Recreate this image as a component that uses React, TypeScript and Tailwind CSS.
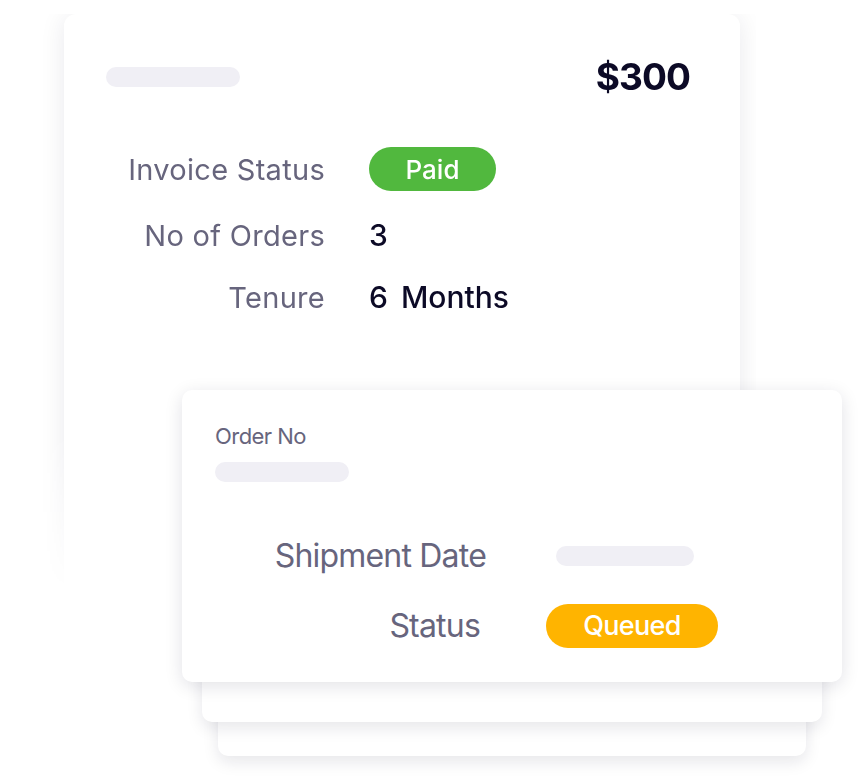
const font = "font-['Inter','Noto_Sans',sans-serif]";

function Bar({ className = "" }: { className?: string }) {
  return <div className={`h-5 rounded-full bg-[#f0eff5] ${className}`} />;
}

function Row({ label, children, className = "" }: { label: string; children: React.ReactNode; className?: string }) {
  return (
    <div className={`flex items-center h-[44px] ${className}`}>
      <span className="w-[261px] text-right text-[29px] leading-none tracking-[0.01em] text-[#67657d]">{label}</span>
      <div className="ml-[44px] flex items-center">{children}</div>
    </div>
  );
}

export default function App() {
  return (
    <div className={`w-[860px] h-[778px] bg-white overflow-hidden ${font}`}>
      {/* invoice card, fading out at the bottom */}
      <div className="pl-[24px] w-[756px] [mask-image:linear-gradient(to_bottom,black_70%,transparent_96%)]">
        <div className="ml-[40px] mt-[14px] w-[676px] h-[600px] bg-white rounded-[12px] shadow-[0_2px_26px_rgba(20,20,50,0.09)]">
          <div className="flex items-center justify-between pl-[42px] pr-[50px] pt-[44px]">
            <Bar className="w-[134px]" />
            <span className="text-[37px] font-bold leading-none text-[#0c0a26] tracking-tight">$300</span>
          </div>
          <div className="mt-[52px]">
            <Row label="Invoice Status">
              <span className="inline-flex items-center justify-center w-[127px] h-[44px] rounded-full bg-[#51b83e] text-white text-[26px] font-medium">
                Paid
              </span>
            </Row>
            <Row label="No of Orders" className="mt-[22px]">
              <span className="text-[30px] font-medium text-[#0c0a26]">3</span>
            </Row>
            <Row label="Tenure" className="mt-[18px]">
              <span className="text-[30px] font-medium text-[#0c0a26] [word-spacing:5px]">6 Months</span>
            </Row>
          </div>
        </div>
      </div>

      {/* order cards stack */}
      <div className="-mt-[224px] ml-[182px] w-[660px] flex flex-col items-center">
        <div className="relative z-30 w-[660px] h-[292px] bg-white rounded-[10px] shadow-[0_4px_18px_rgba(20,20,50,0.12)] pl-[33px] pt-[34px]">
          <div className="text-[22px] leading-6 text-[#67657d] tracking-tight">Order No</div>
          <Bar className="w-[134px] mt-[14px]" />
          <div className="flex items-center mt-[58px]">
            <span className="w-[271px] text-right text-[32px] leading-none text-[#67657d] tracking-tight">Shipment Date</span>
            <Bar className="w-[138px] ml-[70px]" />
          </div>
          <div className="flex items-center mt-[32px]">
            <span className="w-[265px] text-right text-[32px] leading-none text-[#67657d] tracking-tight">Status</span>
            <span className="ml-[66px] inline-flex items-center justify-center w-[172px] h-[44px] rounded-full bg-[#ffb400] text-white text-[27px] font-medium tracking-tight">
              Queued
            </span>
          </div>
        </div>
        <div className="relative z-20 -mt-[100px] w-[620px] h-[140px] bg-white rounded-[10px] shadow-[0_6px_16px_rgba(20,20,50,0.10)]" />
        <div className="relative z-10 -mt-[106px] w-[588px] h-[140px] bg-white rounded-[10px] shadow-[0_6px_16px_rgba(20,20,50,0.10)]" />
      </div>
    </div>
  );
}
